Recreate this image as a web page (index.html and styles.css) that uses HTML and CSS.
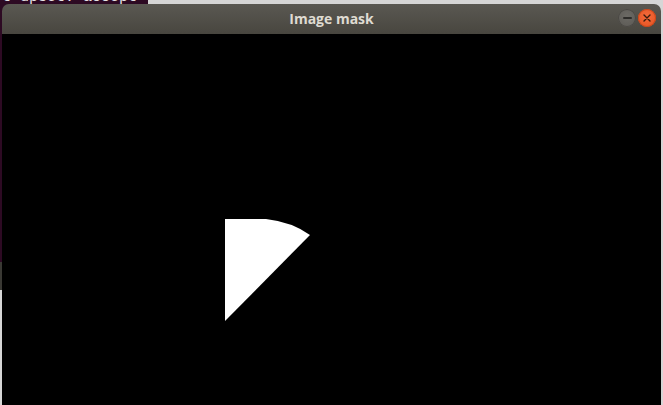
FILE: index.html
```html
<!DOCTYPE html>
<html>
<head>
<meta charset="utf-8">
<link rel="stylesheet" href="styles.css">
</head>
<body>
<div class="desktop">
  <div class="terminal">
    <div class="term-text">t upset: accept</div>
  </div>
  <div class="term-bottom"></div>
  <div class="window">
    <div class="titlebar">
      <span class="title">Image mask</span>
      <div class="controls">
        <span class="btn btn-min"><span class="dash"></span></span>
        <span class="btn btn-close">
          <svg width="10" height="10" viewBox="0 0 10 10"><path d="M2 2 L8 8 M8 2 L2 8" stroke="#3a1a0c" stroke-width="1.4" stroke-linecap="round"/></svg>
        </span>
      </div>
    </div>
    <div class="content">
      <svg class="mask" width="660" height="371" viewBox="0 0 660 371">
        <path d="M223 185 L264 185 Q290 188 308 201 L223 287 Z" fill="#ffffff"/>
      </svg>
    </div>
  </div>
</div>
</body>
</html>
```
FILE: styles.css
```css
html, body {
  margin: 0;
  padding: 0;
  width: 663px;
  height: 405px;
  overflow: hidden;
}
.desktop {
  position: relative;
  width: 663px;
  height: 405px;
  background: #d6d6d6;
  overflow: hidden;
}
.terminal {
  position: absolute;
  left: 0;
  top: 0;
  width: 148px;
  height: 262px;
  background: #2d0a23;
  overflow: hidden;
}
.term-text {
  position: absolute;
  left: 2px;
  top: -10px;
  font-family: "Liberation Mono", "DejaVu Sans Mono", monospace;
  font-size: 15px;
  line-height: 15px;
  color: #e8e2e6;
  white-space: pre;
}
.term-bottom {
  position: absolute;
  left: 0;
  top: 262px;
  width: 148px;
  height: 28px;
  background: #3a3934;
}
.window {
  position: absolute;
  left: 2px;
  top: 4px;
  width: 659px;
  height: 410px;
  display: flex;
  flex-direction: column;
  border-radius: 7px 7px 0 0;
  overflow: hidden;
}
.titlebar {
  height: 30px;
  flex: none;
  position: relative;
  display: flex;
  align-items: center;
  justify-content: center;
  background: linear-gradient(#5a5852, #48463f);
}
.title {
  font-family: "Open Sans", "DejaVu Sans", sans-serif;
  font-weight: 700;
  font-size: 14px;
  color: #dfdbd2;
  margin-top: -2px;
}
.controls {
  position: absolute;
  right: 5px;
  top: 5px;
  display: flex;
  gap: 2px;
}
.btn {
  width: 18px;
  height: 18px;
  border-radius: 50%;
  display: flex;
  align-items: center;
  justify-content: center;
}
.btn-min {
  background: radial-gradient(circle at 50% 40%, #6c6a65, #5a5853);
  box-shadow: inset 0 0 0 1px #4a4844;
}
.dash {
  width: 9px;
  height: 1.5px;
  background: #2e2d2a;
  border-radius: 1px;
}
.btn-close {
  background: radial-gradient(circle at 50% 40%, #f26a3b, #e5511f);
  box-shadow: inset 0 0 0 1px #c8461a;
}
.content {
  flex: 1;
  background: #000000;
}
.mask {
  display: block;
}
```
